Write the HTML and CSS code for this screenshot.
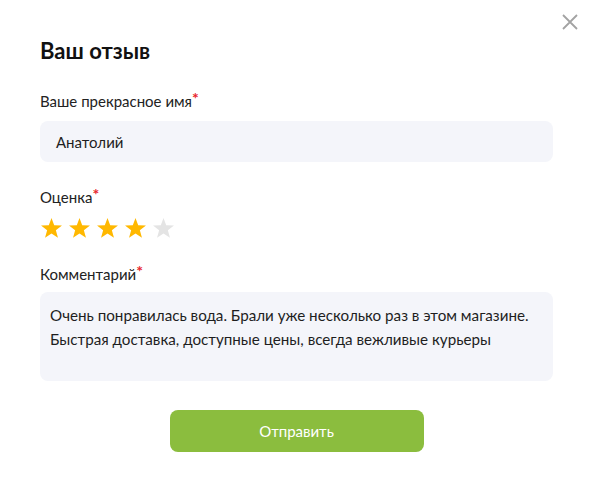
FILE: index.html
```html
<!DOCTYPE html>
<html lang="ru">
<head>
<meta charset="utf-8">
<title>Ваш отзыв</title>
<link rel="stylesheet" href="styles.css">
</head>
<body>
<div class="modal">
  <button class="close" aria-label="Закрыть">
    <svg width="16" height="16" viewBox="0 0 16 16"><path d="M1 1L15 15M15 1L1 15" stroke="#a3a3a3" stroke-width="1.8" fill="none"/></svg>
  </button>
  <h1 class="title">Ваш отзыв</h1>

  <div class="label">Ваше прекрасное имя<span class="req">*</span></div>
  <div class="field input">Анатолий</div>

  <div class="label">Оценка<span class="req">*</span></div>
  <div class="stars">
    <svg class="star on" viewBox="0 0 24 23"><polygon points="12,1 14.82,8.62 22.94,8.95 16.56,13.98 18.76,21.8 12,17.3 5.24,21.8 7.44,13.98 1.06,8.95 9.18,8.62"/></svg>
    <svg class="star on" viewBox="0 0 24 23"><polygon points="12,1 14.82,8.62 22.94,8.95 16.56,13.98 18.76,21.8 12,17.3 5.24,21.8 7.44,13.98 1.06,8.95 9.18,8.62"/></svg>
    <svg class="star on" viewBox="0 0 24 23"><polygon points="12,1 14.82,8.62 22.94,8.95 16.56,13.98 18.76,21.8 12,17.3 5.24,21.8 7.44,13.98 1.06,8.95 9.18,8.62"/></svg>
    <svg class="star on" viewBox="0 0 24 23"><polygon points="12,1 14.82,8.62 22.94,8.95 16.56,13.98 18.76,21.8 12,17.3 5.24,21.8 7.44,13.98 1.06,8.95 9.18,8.62"/></svg>
    <svg class="star off" viewBox="0 0 24 23"><polygon points="12,1 14.82,8.62 22.94,8.95 16.56,13.98 18.76,21.8 12,17.3 5.24,21.8 7.44,13.98 1.06,8.95 9.18,8.62"/></svg>
  </div>

  <div class="label">Комментарий<span class="req">*</span></div>
  <div class="field textarea">Очень понравилась вода. Брали уже несколько раз в этом магазине. Быстрая доставка, доступные цены, всегда вежливые курьеры</div>

  <div class="actions">
    <button class="submit">Отправить</button>
  </div>
</div>
</body>
</html>
```

FILE: styles.css
```css
html, body {
  margin: 0;
  padding: 0;
  background: #ffffff;
}

body {
  font-family: "Lato", "Noto Sans", sans-serif;
  color: #1e1e1e;
}

.modal {
  position: relative;
  width: 594px;
  height: 491px;
  box-sizing: border-box;
  padding: 36px 41px 0 40px;
}

.close {
  position: absolute;
  top: 14px;
  right: 16px;
  width: 16px;
  height: 16px;
  padding: 0;
  border: 0;
  background: none;
  display: flex;
}

.title {
  margin: 0;
  font-size: 22px;
  line-height: 30px;
  font-weight: 700;
  color: #111;
}

.label {
  margin-top: 25px;
  font-size: 15px;
  line-height: 20px;
  color: #222;
}

.req {
  color: #e8262b;
  font-size: 16px;
  font-weight: 700;
  vertical-align: 3px;
  line-height: 0;
}

.field {
  background: #f4f5fa;
  border-radius: 8px;
  font-size: 15px;
  color: #1e1e1e;
}

.input {
  margin-top: 10px;
  height: 41px;
  box-sizing: border-box;
  padding: 0 16px;
  display: flex;
  align-items: center;
}

.stars {
  margin-top: 10px;
  display: flex;
  gap: 5px;
  height: 22px;
}

.star {
  width: 23px;
  height: 22px;
}

.star.on { fill: #ffb800; }
.star.off { fill: #e4e4e4; }

.textarea {
  margin-top: 8px;
  height: 89px;
  box-sizing: border-box;
  padding: 11px 14px 0 10px;
  line-height: 24px;
  font-size: 15.2px;
}

.actions {
  margin-top: 29px;
  display: flex;
  justify-content: center;
}

.submit {
  width: 254px;
  height: 42px;
  border: 0;
  border-radius: 8px;
  background: #8bbd3e;
  color: #ffffff;
  font-family: inherit;
  font-size: 15px;
}
```
